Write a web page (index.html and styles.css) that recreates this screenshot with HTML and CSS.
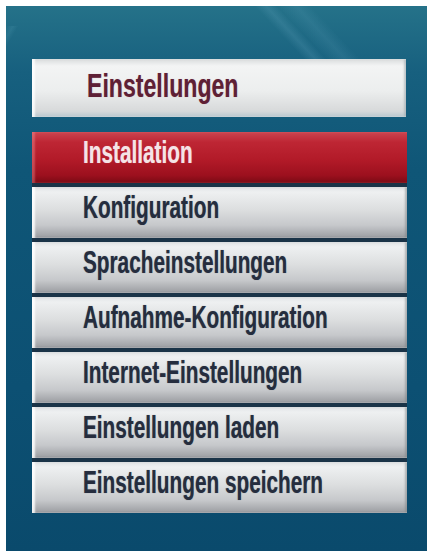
FILE: index.html
```html
<!DOCTYPE html>
<html lang="de">
<head>
<meta charset="utf-8">
<title>Einstellungen</title>
<link rel="stylesheet" href="styles.css">
</head>
<body>
<div class="panel">
  <div class="header"><span class="label">Einstellungen</span></div>
  <ul class="menu">
    <li class="item active"><span class="label">Installation</span></li>
    <li class="item"><span class="label">Konfiguration</span></li>
    <li class="item"><span class="label">Spracheinstellungen</span></li>
    <li class="item"><span class="label">Aufnahme-Konfiguration</span></li>
    <li class="item"><span class="label">Internet-Einstellungen</span></li>
    <li class="item"><span class="label">Einstellungen laden</span></li>
    <li class="item"><span class="label">Einstellungen speichern</span></li>
  </ul>
</div>
</body>
</html>
```
FILE: styles.css
```css
html, body {
  margin: 0;
  padding: 0;
  background: #ffffff;
  width: 431px;
  height: 551px;
  overflow: hidden;
}
.panel {
  box-sizing: border-box;
  margin: 6px 4px 0 6px;
  height: 545px;
  padding: 53px 20px 0 26px;
  background:
    linear-gradient(47deg, rgba(255,255,255,0) 30%, rgba(130,190,215,0.16) 36%, rgba(255,255,255,0) 42%, rgba(130,190,215,0.12) 52%, rgba(255,255,255,0) 60%) 250px 0 / 130px 62px no-repeat,
    linear-gradient(120deg, rgba(120,190,210,0) 0%, rgba(120,190,210,0.12) 8%, rgba(120,190,210,0) 14%) 0 20px / 60px 50px no-repeat,
    linear-gradient(180deg, #257289 0%, #17607f 12%, #0f5677 30%, #0c5073 70%, #0a4a6c 100%);
  font-family: "Liberation Sans", Arial, sans-serif;
  font-weight: bold;
}
.header {
  box-sizing: border-box;
  height: 58px;
  padding: 0 0 4px 55px;
  display: flex;
  align-items: center;
  background: linear-gradient(180deg, #d9dcdd 0%, #f3f4f4 12%, #eceeee 55%, #d7d9da 90%, #b9c7cf 100%);
  box-shadow: inset 3px 0 2px rgba(255,255,255,0.8), inset -2px 0 2px rgba(160,170,175,0.6);
  margin-right: 1px;
}
.header .label {
  display: inline-block;
  font-size: 33px;
  color: #5e2035;
  transform: scaleX(0.70);
  transform-origin: left center;
  white-space: nowrap;
  text-shadow: 0 0 1px rgba(140,40,60,0.4);
}
.menu {
  list-style: none;
  margin: 15px 0 0 0;
  padding: 0;
  display: flex;
  flex-direction: column;
  gap: 4px;
  background: #1a3347;
}
.item {
  box-sizing: border-box;
  height: 51px;
  padding: 0 0 9px 51px;
  display: flex;
  align-items: center;
  background: linear-gradient(180deg, #e0e3e5 0%, #eef0f1 10%, #dcdedf 45%, #c6c8cb 75%, #a3a5a9 95%, #8a8d92 100%);
  box-shadow: inset 3px 0 2px rgba(255,255,255,0.85), inset -2px 0 2px rgba(120,125,130,0.5);
}
.item .label {
  display: inline-block;
  font-size: 31px;
  color: #252d3e;
  transform: scaleX(0.67);
  transform-origin: left center;
  white-space: nowrap;
  text-shadow: 0 0 1px rgba(30,40,60,0.5);
}
.item.active {
  background: linear-gradient(180deg, #cc4450 0%, #be2634 20%, #b21a28 55%, #9c101e 85%, #7a0a14 100%);
  box-shadow: inset 3px 0 2px rgba(255,170,170,0.35);
}
.item.active .label {
  color: #f4e4e7;
  text-shadow: 0 0 1px rgba(255,220,225,0.5);
}
```
